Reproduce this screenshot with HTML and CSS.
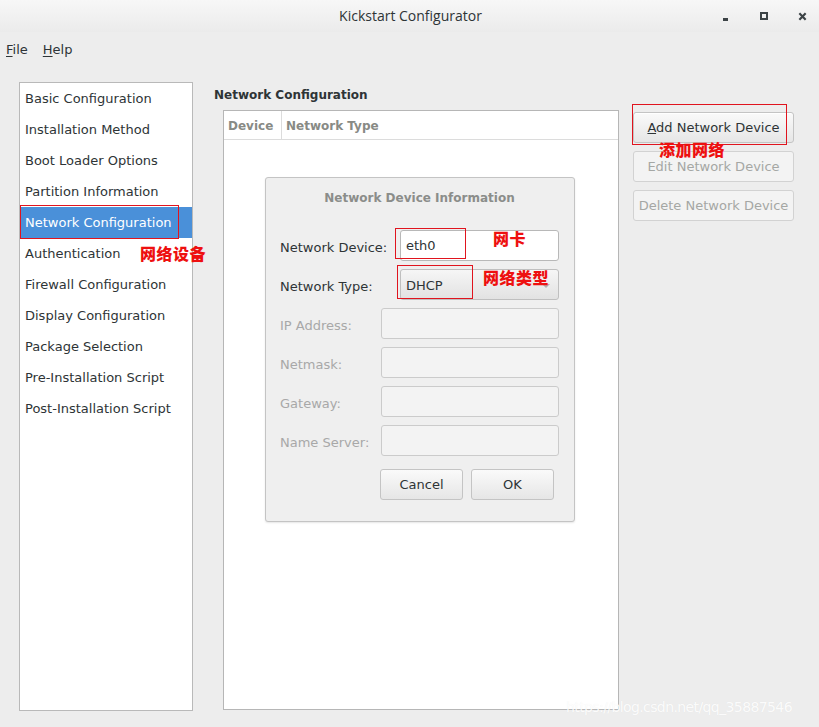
FILE: index.html
```html
<!DOCTYPE html>
<html>
<head>
<meta charset="utf-8">
<link rel="stylesheet" href="styles.css">
</head>
<body>
<div class="window">
  <div class="titlebar">
    <div class="title">Kickstart Configurator</div>
    <div class="controls">
      <span class="ctl min"></span>
      <span class="ctl max"></span>
      <span class="ctl close">
        <svg width="9" height="9" viewBox="0 0 10 10"><path d="M1.5 1.5 L8.5 8.5 M8.5 1.5 L1.5 8.5" stroke="#3c4346" stroke-width="2.4"/></svg>
      </span>
    </div>
  </div>
  <div class="menubar">
    <span class="menu"><u>F</u>ile</span>
    <span class="menu"><u>H</u>elp</span>
  </div>
  <div class="main">
    <ul class="sidebar">
      <li>Basic Configuration</li>
      <li>Installation Method</li>
      <li>Boot Loader Options</li>
      <li>Partition Information</li>
      <li class="selected">Network Configuration</li>
      <li>Authentication</li>
      <li>Firewall Configuration</li>
      <li>Display Configuration</li>
      <li>Package Selection</li>
      <li>Pre-Installation Script</li>
      <li>Post-Installation Script</li>
    </ul>
    <div class="content">
      <div class="heading">Network Configuration</div>
      <div class="body">
        <div class="tree">
          <div class="tree-head">
            <div class="col c1">Device</div>
            <div class="col c2">Network Type</div>
          </div>
        </div>
        <div class="actions">
          <button class="btn primary"><u>A</u>dd Network Device</button>
          <button class="btn disabled">Edit Network Device</button>
          <button class="btn disabled">Delete Network Device</button>
        </div>
      </div>
    </div>
  </div>

  <div class="dialog">
    <div class="dlg-title">Network Device Information</div>
    <div class="form">
      <label class="lbl">Network Device:</label>
      <div class="entry wide">eth0</div>
      <label class="lbl">Network Type:</label>
      <div class="combo wide">DHCP<span class="arrow"></span></div>
      <label class="lbl off">IP Address:</label>
      <div class="entry off"></div>
      <label class="lbl off">Netmask:</label>
      <div class="entry off"></div>
      <label class="lbl off">Gateway:</label>
      <div class="entry off"></div>
      <label class="lbl off">Name Server:</label>
      <div class="entry off"></div>
    </div>
    <div class="dlg-buttons">
      <button class="btn dbtn">Cancel</button>
      <button class="btn dbtn">OK</button>
    </div>
  </div>

  <div class="mark box-nav"></div>
  <div class="note note-nav">网络设备</div>
  <div class="mark box-add"></div>
  <div class="note note-add">添加网络</div>
  <div class="mark box-eth"></div>
  <div class="note note-eth">网卡</div>
  <div class="mark box-dhcp"></div>
  <div class="note note-dhcp">网络类型</div>
  <div class="watermark">https://blog.csdn.net/qq_35887546</div>
</div>
</body>
</html>
```
FILE: styles.css
```css
*, *::before, *::after { box-sizing: border-box; }
html, body { margin: 0; padding: 0; }
body {
  width: 819px;
  height: 727px;
  overflow: hidden;
  background: #ededed;
  font-family: "DejaVu Sans", "Noto Sans CJK SC", sans-serif;
  font-size: 13px;
  color: #2e3436;
}
.window {
  position: relative;
  width: 819px;
  height: 727px;
  background: #ededed;
}
.titlebar {
  height: 32px;
  background: linear-gradient(#f7f7f7, #ebebeb);
  display: flex;
  align-items: center;
  justify-content: center;
  position: relative;
}
.title {
  font-family: "Open Sans", "DejaVu Sans", sans-serif;
  font-size: 14px;
  color: #2e3436;
  margin-left: 2px;
  margin-top: -1px;
}
.controls {
  position: absolute;
  right: -3px;
  top: 0;
  height: 32px;
  display: flex;
  align-items: center;
}
.ctl {
  width: 38.5px;
  height: 32px;
  display: flex;
  align-items: center;
  justify-content: center;
}
.ctl.min::after {
  content: "";
  width: 5px;
  height: 3px;
  background: #3c4346;
  margin-top: 7px;
}
.ctl.max::after {
  content: "";
  width: 8px;
  height: 8px;
  border: 2px solid #3c4346;
}
.menubar {
  height: 34px;
  display: flex;
  align-items: center;
  padding-left: 6px;
  gap: 15px;
  font-size: 13px;
}
.menu u { text-decoration-thickness: 1px; text-underline-offset: 2px; }
.main {
  display: flex;
  padding: 16px 0 0 19px;
}
.sidebar {
  list-style: none;
  margin: 0;
  padding: 0;
  width: 174px;
  height: 629px;
  background: #fff;
  border: 1px solid #b9b9b9;
}
.sidebar li {
  height: 31px;
  line-height: 32px;
  padding-left: 5px;
  font-size: 13px;
  color: #2e3436;
  white-space: nowrap;
}
.sidebar li.selected {
  background: #4a90d9;
  color: #fff;
}
.content {
  margin-left: 21px;
  display: flex;
  flex-direction: column;
}
.heading {
  font-weight: bold;
  font-size: 12px;
  height: 28px;
  line-height: 26px;
  color: #2e3436;
}
.body {
  display: flex;
  padding-left: 9px;
}
.tree {
  width: 396px;
  height: 600px;
  background: #fff;
  border: 1px solid #b6b6b6;
}
.tree-head {
  display: flex;
  height: 29px;
  border-bottom: 1px solid #dcdcdc;
}
.col {
  font-weight: bold;
  color: #888a85;
  font-size: 12px;
  line-height: 30px;
  padding-left: 4px;
}
.col.c1 { width: 58px; border-right: 1px solid #dcdcdc; }
.col.c2 { padding-left: 4px; }
.actions {
  margin-left: 14px;
  margin-top: 2px;
  display: flex;
  flex-direction: column;
  gap: 8px;
}
.btn {
  font-family: "DejaVu Sans", sans-serif;
  font-size: 13px;
  height: 31px;
  border-radius: 3px;
  border: 1px solid #c4c4c4;
  background: linear-gradient(#fafafa, #e6e6e6);
  color: #2e3436;
  padding: 0;
}
.actions .btn { width: 161px; }
.btn.primary { box-shadow: inset 0 1px #fff; }
.btn.disabled {
  background: #f3f3f3;
  color: #a5a7a4;
  border-color: #d2d2d2;
}
.dialog {
  position: absolute;
  left: 265px;
  top: 177px;
  width: 310px;
  height: 345px;
  background: #efefef;
  border: 1px solid #c4c4c4;
  border-radius: 3px;
  box-shadow: 0 1px 2px rgba(0,0,0,0.1);
  padding: 0 15px 0 14px;
}
.dlg-title {
  text-align: center;
  font-weight: bold;
  color: #8b8d8a;
  height: 39px;
  line-height: 40px;
  font-size: 12px;
}
.form {
  margin-top: 13px;
  display: grid;
  grid-template-columns: 101px 178px;
  row-gap: 8px;
  align-items: center;
}
.lbl { font-size: 13px; color: #2e3436; white-space: nowrap; padding-top: 3px; }
.lbl.off { color: #a8a8a8; }
.entry {
  height: 31px;
  background: #fff;
  border: 1px solid #b8b8b8;
  border-radius: 3px;
  line-height: 30px;
  padding-left: 5px;
  font-size: 13px;
}
.wide { margin-left: 19px; }
.entry.off {
  background: #f3f3f3;
  border-color: #cbcbcb;
}
.combo {
  height: 31px;
  border: 1px solid #bfbfbf;
  border-radius: 3px;
  background: linear-gradient(#f6f6f6, #e2e2e2);
  line-height: 31px;
  padding-left: 5px;
  position: relative;
}
.arrow {
  position: absolute;
  right: 8px;
  top: 14px;
  width: 0;
  height: 0;
  border-left: 4px solid transparent;
  border-right: 4px solid transparent;
  border-top: 4px solid #b0b0b0;
}
.dlg-buttons {
  display: flex;
  gap: 8px;
  margin-top: 13px;
  padding-left: 100px;
}
.dbtn { width: 83px; }

.mark {
  position: absolute;
  border: 1px solid #e0141e;
}
.box-nav { left: 20px; top: 205px; width: 159px; height: 34px; }
.box-add { left: 632px; top: 104px; width: 155px; height: 41px; }
.box-eth { left: 395px; top: 228px; width: 71px; height: 31px; }
.box-dhcp { left: 397px; top: 265px; width: 76px; height: 34px; }
.note {
  position: absolute;
  font-family: "Noto Sans CJK SC", sans-serif;
  font-weight: 900;
  color: #ee1010;
  font-size: 16px;
  line-height: 17px;
  letter-spacing: 0.5px;
}
.note-nav { left: 140px; top: 245px; }
.note-add { left: 659px; top: 141px; }
.note-eth { left: 493px; top: 230px; }
.note-dhcp { left: 483px; top: 269px; }
.watermark {
  position: absolute;
  left: 566px;
  top: 699px;
  font-family: "DejaVu Sans", sans-serif;
  font-size: 14px;
  color: rgba(255,255,255,0.9);
  text-shadow: 0 0 1px rgba(0,0,0,0.06);
  white-space: nowrap;
  letter-spacing: -0.6px;
}
```
